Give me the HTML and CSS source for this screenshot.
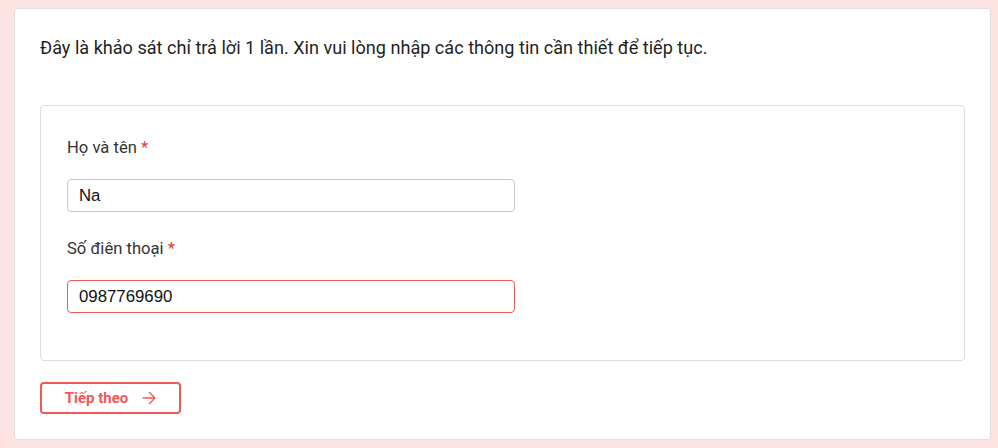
FILE: index.html
```html
<!DOCTYPE html>
<html lang="vi">
<head>
<meta charset="utf-8">
<link rel="stylesheet" href="styles.css">
</head>
<body>
<div class="page">
  <div class="card">
    <p class="intro">Đây là khảo sát chỉ trả lời 1 lần. Xin vui lòng nhập các thông tin cần thiết để tiếp tục.</p>
    <div class="box">
      <div class="field">
        <label class="label">Họ và tên <span class="req">*</span></label>
        <input class="input" type="text" value="Na">
      </div>
      <div class="field">
        <label class="label">Số điên thoại <span class="req">*</span></label>
        <input class="input input-error" type="text" value="0987769690">
      </div>
    </div>
    <button class="btn" type="button">Tiếp theo
      <svg class="arrow" width="14" height="14" viewBox="0 0 14 14" fill="none" stroke="currentColor" stroke-width="1.4" stroke-linecap="round" stroke-linejoin="round"><path d="M1 7h12M7.5 1.5 13 7l-5.5 5.5"/></svg>
    </button>
  </div>
</div>
</body>
</html>
```
FILE: styles.css
```css
* { box-sizing: border-box; }
html, body { margin: 0; padding: 0; }
body {
  background: #fde4e2;
  font-family: Roboto, "Noto Sans", sans-serif;
  color: #222;
}
.page {
  padding: 8px 7px 8px 14px;
}
.card {
  width: 977px;
  height: 432px;
  background: #fff;
  border: 1px solid #e0e0e0;
  border-radius: 3px;
  padding: 26px 25px 0 25px;
}
.intro {
  margin: 0;
  font-size: 18.1px;
  line-height: 26px;
  color: #1f1f1f;
}
.box {
  margin-top: 44px;
  border: 1px solid #dcdcdc;
  border-radius: 4px;
  padding: 32px 26px 14px 26px;
  height: 256px;
}
.field {
  display: flex;
  flex-direction: column;
  margin-bottom: 27px;
}
.label {
  font-size: 16.6px;
  line-height: 20px;
  color: #333;
  margin-bottom: 21px;
}
.req { color: #e53935; }
.input {
  width: 448px;
  height: 33px;
  border: 1px solid #c8c8c8;
  border-radius: 4px;
  padding: 0 11px;
  font-family: "Liberation Sans", Arial, sans-serif;
  font-size: 16.8px;
  color: #111;
  outline: none;
}
.input-error { border-color: #ef5b5b; }
.btn {
  margin-top: 21px;
  width: 141px;
  height: 32px;
  border: 2px solid #f35757;
  border-radius: 4px;
  background: #fff;
  color: #f35757;
  font-family: Roboto, sans-serif;
  font-weight: 700;
  font-size: 15px;
  display: flex;
  align-items: center;
  justify-content: center;
  gap: 14px;
  padding: 0;
  cursor: pointer;
}
.arrow { display: block; }
```
